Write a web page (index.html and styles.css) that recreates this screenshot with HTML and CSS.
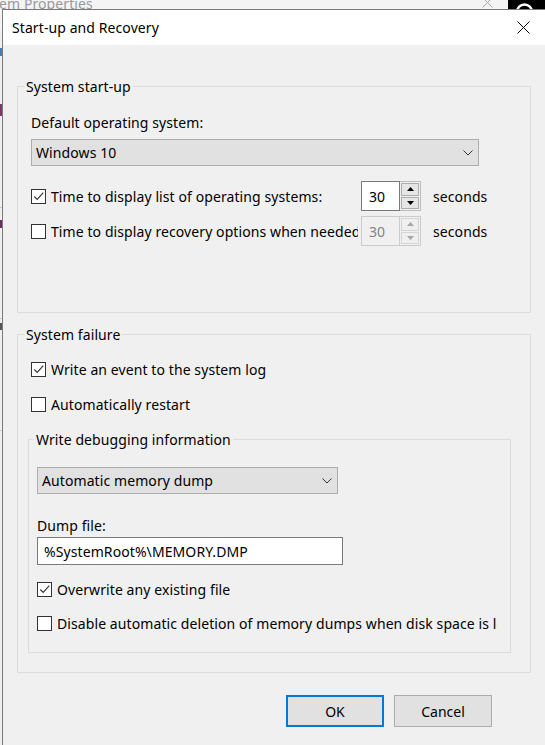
FILE: index.html
```html
<!DOCTYPE html>
<html lang="en">
<head>
<meta charset="utf-8">
<title>Start-up and Recovery</title>
<link rel="stylesheet" href="styles.css">
</head>
<body>
<div class="bg-window">
  <div class="bg-title">
    <span class="bg-title-text">em Properties</span>
    <svg class="bg-close" width="11" height="11" viewBox="0 0 11 11"><path d="M0.5 0.5 L10.5 10.5 M10.5 0.5 L0.5 10.5" stroke="#a8a8a8" stroke-width="1" fill="none"/></svg>
  </div>
  <span class="frag frag-a"></span>
  <span class="frag frag-b"></span>
  <span class="frag frag-c"></span>
  <span class="frag frag-d"></span>
  <span class="rule rule-a"></span>
  <span class="rule rule-b"></span>
  <span class="rule rule-c"></span>
</div>
<div class="bg-app">
  <svg class="bg-help" width="37" height="30" viewBox="0 0 37 30"><circle cx="16.5" cy="12" r="7.5" stroke="#fff" stroke-width="2.4" fill="none"/></svg>
</div>

<div class="dialog">
  <div class="titlebar">
    <span class="title">Start-up and Recovery</span>
    <span class="close">
      <svg width="13" height="13" viewBox="0 0 13 13"><path d="M0.5 0.5 L12.5 12.5 M12.5 0.5 L0.5 12.5" stroke="#000" stroke-width="1" fill="none"/></svg>
    </span>
  </div>

  <div class="content">
    <fieldset class="group group-startup">
      <legend>System start-up</legend>
      <div class="group-body">
        <div class="field-label">Default operating system:</div>
        <div class="combo combo-os">
          <span>Windows 10</span>
          <svg width="10" height="6" viewBox="0 0 10 6"><polyline points="0.5,0.5 5,5 9.5,0.5" stroke="#333" stroke-width="1" fill="none"/></svg>
        </div>
        <div class="row row-first">
          <label class="check check-wide">
            <span class="box"><svg width="13" height="13" viewBox="0 0 13 13"><polyline points="2.3,6.5 5.2,9.4 11.3,2.6" stroke="#333" stroke-width="1.1" fill="none"/></svg></span>
            <span class="check-text">Time to display list of operating systems:</span>
          </label>
          <div class="spin">
            <span class="spin-val">30</span>
            <span class="spin-btns">
              <span class="spin-btn"><svg width="7" height="4" viewBox="0 0 7 4"><polygon points="0,4 3.5,0 7,4" fill="#000"/></svg></span>
              <span class="spin-btn"><svg width="7" height="4" viewBox="0 0 7 4"><polygon points="0,0 7,0 3.5,4" fill="#000"/></svg></span>
            </span>
          </div>
          <span class="unit">seconds</span>
        </div>
        <div class="row row-second">
          <label class="check check-wide">
            <span class="box"></span>
            <span class="check-text">Time to display recovery options when needed:</span>
          </label>
          <div class="spin spin-disabled">
            <span class="spin-val">30</span>
            <span class="spin-btns">
              <span class="spin-btn"><svg width="7" height="4" viewBox="0 0 7 4"><polygon points="0,4 3.5,0 7,4" fill="#a6a6a6"/></svg></span>
              <span class="spin-btn"><svg width="7" height="4" viewBox="0 0 7 4"><polygon points="0,0 7,0 3.5,4" fill="#a6a6a6"/></svg></span>
            </span>
          </div>
          <span class="unit">seconds</span>
        </div>
      </div>
    </fieldset>

    <fieldset class="group group-failure">
      <legend>System failure</legend>
      <label class="check check-log">
        <span class="box"><svg width="13" height="13" viewBox="0 0 13 13"><polyline points="2.3,6.5 5.2,9.4 11.3,2.6" stroke="#333" stroke-width="1.1" fill="none"/></svg></span>
        <span class="check-text">Write an event to the system log</span>
      </label>
      <label class="check check-restart">
        <span class="box"></span>
        <span class="check-text">Automatically restart</span>
      </label>

      <fieldset class="group group-debug">
        <legend>Write debugging information</legend>
        <div class="debug-body">
          <div class="combo combo-dump">
            <span>Automatic memory dump</span>
            <svg width="10" height="6" viewBox="0 0 10 6"><polyline points="0.5,0.5 5,5 9.5,0.5" stroke="#333" stroke-width="1" fill="none"/></svg>
          </div>
          <div class="field-label dump-label">Dump file:</div>
          <div class="textbox">%SystemRoot%\MEMORY.DMP</div>
          <label class="check check-overwrite">
            <span class="box"><svg width="13" height="13" viewBox="0 0 13 13"><polyline points="2.3,6.5 5.2,9.4 11.3,2.6" stroke="#333" stroke-width="1.1" fill="none"/></svg></span>
            <span class="check-text">Overwrite any existing file</span>
          </label>
          <label class="check check-disable">
            <span class="box"></span>
            <span class="check-text">Disable automatic deletion of memory dumps when disk space is low</span>
          </label>
        </div>
      </fieldset>
    </fieldset>

    <div class="actions">
      <button class="btn btn-default" type="button">OK</button>
      <button class="btn" type="button">Cancel</button>
    </div>
  </div>
</div>
</body>
</html>
```

FILE: styles.css
```css
* { box-sizing: border-box; }

html, body {
  margin: 0;
  padding: 0;
}

body {
  width: 545px;
  height: 745px;
  overflow: hidden;
  position: relative;
  background: #f0f0f0;
  font-family: "Noto Sans", "DejaVu Sans", sans-serif;
  font-size: 14px;
  line-height: 19px;
  letter-spacing: 0.09px;
  color: #000;
}

/* background window (System Properties) */
.bg-window {
  position: absolute;
  left: 0;
  top: 0;
  width: 508px;
  height: 745px;
  background: #f0f0f0;
}

.bg-title {
  position: relative;
  height: 30px;
  background: #f4f4f4;
  overflow: hidden;
}

.bg-title-text {
  position: absolute;
  left: -1px;
  top: -6px;
  color: #9a9a9a;
  white-space: nowrap;
}

.bg-close {
  position: absolute;
  left: 482px;
  top: -3px;
}

.frag {
  position: absolute;
  left: 0;
  width: 2px;
}

.frag-a { top: 48px; height: 8px; background: #4a7ab8; }
.frag-b { top: 104px; height: 12px; background: #7b3b66; }
.frag-c { top: 220px; height: 8px; background: #6b2f5f; }
.frag-d { top: 323px; height: 7px; background: #555; }

.rule {
  position: absolute;
  left: 0;
  width: 2px;
  height: 1px;
  background: #c8c8c8;
}

.rule-a { top: 207px; }
.rule-b { top: 318px; }
.rule-c { top: 430px; }

.bg-app {
  position: absolute;
  left: 508px;
  top: 0;
  width: 37px;
  height: 30px;
  background: #000;
}

.bg-help {
  display: block;
}

/* dialog */
.dialog {
  position: absolute;
  left: 2px;
  top: 9px;
  width: 544px;
  height: 740px;
  border: 1px solid #7a7a7a;
  background: #f0f0f0;
}

.titlebar {
  display: flex;
  align-items: center;
  justify-content: space-between;
  height: 35px;
  background: #fff;
  padding-left: 9px;
}

.close {
  width: 43px;
  height: 35px;
  display: flex;
  align-items: center;
  justify-content: center;
}

.content {
  padding: 32px 14px 0 14px;
}

.group {
  margin: 0;
  min-width: 0;
  border: 1px solid #dcdcdc;
}

.group legend {
  padding: 0 2px;
  margin: 0;
  line-height: 19px;
}

.group-startup {
  padding: 17px 0 66px 6px;
}

.group-body {
  margin-left: 7px;
}

.field-label {
  height: 19px;
}

.combo {
  display: flex;
  align-items: center;
  justify-content: space-between;
  height: 27px;
  border: 1px solid #adadad;
  background: #e1e1e1;
  padding: 0 5px 0 4px;
  white-space: nowrap;
}

.combo svg {
  flex: none;
}

.combo-os {
  margin-top: 7px;
  width: 448px;
}

.row {
  display: flex;
  align-items: center;
  height: 30px;
}

.row-first { margin-top: 15px; }
.row-second { margin-top: 5px; }

.check {
  display: flex;
  align-items: center;
  height: 20px;
  white-space: nowrap;
  overflow: hidden;
}

.box {
  flex: none;
  width: 15px;
  height: 15px;
  border: 1px solid #333;
  background: #fff;
  display: flex;
}

.check-text {
  margin-left: 5px;
}

.check-wide {
  width: 327px;
  height: 30px;
}

.spin {
  display: flex;
  width: 60px;
  height: 30px;
  margin-left: 3px;
  flex: none;
}

.spin-val {
  width: 39px;
  border: 1px solid #7a7a7a;
  background: #fff;
  padding-left: 7px;
  display: flex;
  align-items: center;
}

.spin-btns {
  width: 21px;
  border: 1px solid #bcbcbc;
  border-left: none;
  padding: 1px;
  display: flex;
  flex-direction: column;
  gap: 1px;
}

.spin-btn {
  flex: 1;
  border: 1px solid #adadad;
  background: #e5e5e5;
  display: flex;
  align-items: center;
  justify-content: center;
}

.spin-disabled .spin-val {
  border-color: #cccccc;
  background: #f0f0f0;
  color: #838383;
}

.spin-disabled .spin-btns {
  border-color: #cccccc;
}

.spin-disabled .spin-btn {
  border-color: #d5d5d5;
  background: #efefef;
}

.unit {
  margin-left: 12px;
}

/* system failure */
.group-failure {
  margin-top: 12px;
  padding: 15px 0 19px 6px;
}

.check-log {
  margin-left: 7px;
}

.check-restart {
  margin-left: 7px;
  margin-top: 15px;
}

.group-debug {
  margin: 16px 19px 0 4px;
  padding: 18px 0 19px 5px;
}

.debug-body {
  margin-left: 3px;
}

.combo-dump {
  width: 301px;
}

.dump-label {
  margin-top: 22px;
}

.textbox {
  margin-top: 2px;
  width: 306px;
  height: 28px;
  border: 1px solid #7a7a7a;
  background: #fff;
  padding-left: 6px;
  display: flex;
  align-items: center;
  white-space: nowrap;
}

.check-overwrite {
  margin-top: 14px;
}

.check-disable {
  margin-top: 14px;
  width: 460px;
}

/* buttons */
.actions {
  display: flex;
  justify-content: flex-end;
  gap: 10px;
  margin-top: 22px;
  padding-right: 39px;
}

.btn {
  width: 98px;
  height: 32px;
  padding: 0;
  background: #e1e1e1;
  border: 1px solid #adadad;
  font: inherit;
  color: #000;
}

.btn-default {
  border: 2px solid #0078d7;
}
```
